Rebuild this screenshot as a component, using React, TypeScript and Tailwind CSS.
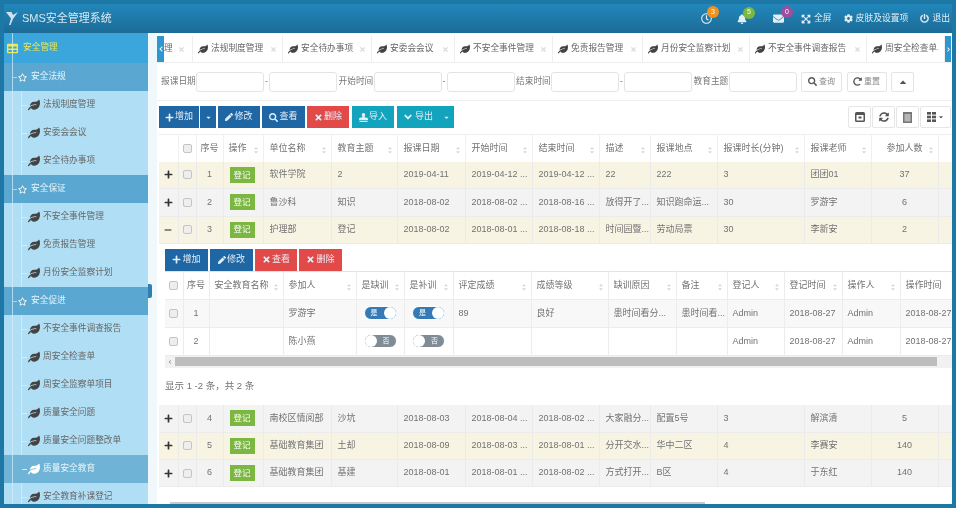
import type { ReactNode } from "react";
import {
  FaBell,
  FaCaretDown,
  FaCaretUp,
  FaCog,
  FaEnvelope,
  FaExpandArrowsAlt,
  FaAngleDown,
  FaChevronLeft,
  FaChevronRight,
  FaLeaf,
  FaMinus,
  FaPen,
  FaPlus,
  FaPowerOff,
  FaRedoAlt,
  FaRegClock,
  FaRegStar,
  FaSearch,
  FaStamp,
  FaSyncAlt,
  FaTable,
  FaTimes,
} from "react-icons/fa";

const sections = [
  { title: "安全法规", items: ["法规制度管理", "安委会会议", "安全待办事项"] },
  { title: "安全保证", items: ["不安全事件管理", "免责报告管理", "月份安全监察计划"] },
  {
    title: "安全促进",
    items: ["不安全事件调查报告", "周安全检查单", "周安全监察单项目", "质量安全问题", "质量安全问题整改单", "质量安全教育", "安全教育补课登记"],
  },
];

const tabs = [
  { label: "法规制度管理", w: "w-[90px]" },
  { label: "安全待办事项", w: "w-[89px]" },
  { label: "安委会会议", w: "w-[83px]" },
  { label: "不安全事件管理", w: "w-[98px]" },
  { label: "免责报告管理", w: "w-[90px]" },
  { label: "月份安全监察计划", w: "w-[107px]" },
  { label: "不安全事件调查报告", w: "w-[117px]" },
  { label: "周安全检查单", w: "w-[78px]" },
];

const mainHead = ["单位名称", "教育主题", "报课日期", "开始时间", "结束时间", "描述", "报课地点", "报课时长(分钟)", "报课老师", "参加人数"];

const topRows = [
  ["软件学院", "2", "2019-04-11", "2019-04-12 ...", "2019-04-12 ...", "22", "222", "3", "团团01", "37"],
  ["鲁沙科", "知识", "2018-08-02", "2018-08-02 ...", "2018-08-16 ...", "放得开了...", "知识跑命运...", "30", "罗游宇", "6"],
  ["护理部", "登记", "2018-08-02", "2018-08-01 ...", "2018-08-18 ...", "时间园暨...", "劳动局票", "30", "李新安", "2"],
];

const bottomRows = [
  ["南校区情阅部", "沙坑", "2018-08-03", "2018-08-04 ...", "2018-08-02 ...", "大家融分...", "配置5号", "3", "解滨清", "5"],
  ["基础教育集团", "土却", "2018-08-09", "2018-08-03 ...", "2018-08-01 ...", "分开交水...", "华中二区", "4", "李赛安", "140"],
  ["基础教育集团", "基建", "2018-08-01", "2018-08-01 ...", "2018-08-02 ...", "方式打开...", "B区", "4", "于东红", "140"],
];

const detailHead = ["评定成绩", "成绩等级", "缺训原因", "备注", "登记人", "登记时间", "操作人", "操作时间"];

function SortArrows() {
  return (
    <span className="absolute right-[4px] top-[10px] flex flex-col text-[#d5d5d5]">
      <FaCaretUp size={6} className="-mb-[2px]" />
      <FaCaretDown size={6} />
    </span>
  );
}

function Box() {
  return <span className="mx-auto block h-[9px] w-[9px] rounded-[2px] border border-[#c4c4c4] bg-[#eeeeee]" />;
}

function Btn({ color, w, icon, label }: { color: string; w: string; icon: ReactNode; label: string }) {
  return (
    <button className={`flex h-[22px] items-center justify-center gap-[1px] text-[9px] text-[#e4eef6] ${color} ${w}`}>
      {icon}
      {label}
    </button>
  );
}

function Toggle({ on }: { on: boolean }) {
  return (
    <span
      className={`mx-auto flex h-[14px] w-[33px] items-center rounded-full border border-white text-[7px] text-white ${
        on ? "flex-row bg-[#337ab7]" : "flex-row-reverse bg-[#7f8c96]"
      }`}
    >
      <span className="flex-1 text-center">{on ? "是" : "否"}</span>
      <span className="h-[12px] w-[12px] rounded-full bg-white" />
    </span>
  );
}

function Sidebar() {
  return (
    <aside className="relative w-[144px] shrink-0 overflow-hidden bg-[#b0dff5] text-[8.7px] text-[#666666]">
      <span className="absolute bottom-0 left-[8px] top-0 z-10 w-px bg-[#d4eefa]/70" />
      <div className="flex h-[30px] items-center bg-[#3aa6dc] pl-[3px] text-[#e6e85a]">
        <FaTable size={11} className="mr-[5px] text-[#f6ea3c]" />
        安全管理
      </div>
      {sections.map((s) => (
        <div key={s.title}>
          <div className="flex h-[28px] items-center bg-[#5aa8d1] pl-[9px] text-[#e8f4fa]">
            <span className="mr-px h-px w-[4px] bg-[#a9d6ec]" />
            <FaRegStar size={9} className="mr-[4px] text-white" />
            {s.title}
          </div>
          <div className="relative">
            <span className="absolute inset-y-0 left-[17px] w-px bg-[#cdebf9]" />
            {s.items.map((item) => {
              const active = item === "质量安全教育";
              return (
                <div
                  key={item}
                  className={`relative flex h-[28px] items-center pl-[18px] ${active ? "bg-[#6fb3d6] text-[#e8f4fa]" : ""}`}
                >
                  <span className="mr-px h-px w-[5px] bg-[#cdebf9]" />
                  <FaLeaf size={12} className={`mr-[3px] ${active ? "text-white" : "text-[#444444]"}`} />
                  {item}
                </div>
              );
            })}
          </div>
        </div>
      ))}
    </aside>
  );
}

function Tabs() {
  return (
    <div className="flex h-[27px] items-stretch border-b border-[#eeeeee] text-[8.7px] text-[#666666]">
      <span className="flex w-[7px] items-center justify-center bg-[#2f97cf] text-white">
        <FaChevronLeft size={6} />
      </span>
      <div className="flex w-[29px] items-center justify-between border-r border-[#eeeeee] pr-[7px]">
        理<FaTimes size={7} className="text-[#dddddd]" />
      </div>
      {tabs.map((t) => (
        <div key={t.label} className={`flex items-center justify-between border-r border-[#eeeeee] px-[5px] ${t.w}`}>
          <span className="flex items-center gap-[3px] whitespace-nowrap">
            <FaLeaf size={10} className="text-[#444444]" />
            {t.label}
          </span>
          <FaTimes size={7} className="text-[#dddddd]" />
        </div>
      ))}
      <span className="flex w-[6px] items-center justify-center bg-[#2f97cf] text-white">
        <FaChevronRight size={5} />
      </span>
    </div>
  );
}

function Field({ label, gap }: { label: string; gap?: boolean }) {
  const input = "h-[20px] w-[68px] rounded-[3px] border border-[#e4e4e4] bg-white";
  return (
    <div className="flex items-center text-[8.7px] text-[#777777]">
      <span className="w-[35px] whitespace-nowrap">{label}</span>
      <span className={input} />
      {gap && (
        <>
          <span className="w-[5px] text-center">-</span>
          <span className={input} />
        </>
      )}
    </div>
  );
}

function Filters() {
  const btn = "flex h-[20px] items-center justify-center gap-[2px] rounded-[2px] border border-[#e4e4e4] text-[8px] text-[#888888]";
  return (
    <div className="flex h-[38px] items-center gap-[1.5px] border-b border-[#eeeeee] pl-[4px]">
      <Field label="报课日期" gap />
      <Field label="开始时间" gap />
      <Field label="结束时间" gap />
      <Field label="教育主题" />
      <button className={`${btn} ml-[3px] w-[41px]`}>
        <FaSearch size={9} className="text-[#555555]" />
        查询
      </button>
      <button className={`${btn} ml-[3px] w-[40px]`}>
        <FaRedoAlt size={9} className="text-[#555555]" />
        重置
      </button>
      <button className={`${btn} ml-[3px] w-[23px]`}>
        <FaCaretUp size={10} className="text-[#555555]" />
      </button>
    </div>
  );
}

function Toolbar() {
  const tool = "flex h-[22px] items-center justify-center rounded-[2px] border border-[#e6e6e6] text-[#555555]";
  return (
    <div className="ml-[2px] flex h-[33px] items-start pr-[1px] pt-[5px]">
      <div className="flex gap-[2px]">
        <div className="flex gap-px">
          <Btn color="bg-[#1f66a5]" w="w-[40px]" icon={<FaPlus size={9} />} label="增加" />
          <Btn color="bg-[#1f66a5]" w="w-[16px]" icon={<FaCaretDown size={7} />} label="" />
        </div>
        <Btn color="bg-[#1f66a5]" w="w-[42px]" icon={<FaPen size={8} />} label="修改" />
        <Btn color="bg-[#1f66a5]" w="w-[43px]" icon={<FaSearch size={9} />} label="查看" />
        <Btn color="bg-[#e24a4a]" w="w-[42px]" icon={<FaTimes size={9} />} label="删除" />
        <Btn color="bg-[#12a4bd] ml-[1px]" w="w-[42px]" icon={<FaStamp size={9} />} label="导入" />
        <div className="ml-[1px] flex">
          <Btn color="bg-[#12a4bd]" w="w-[41px]" icon={<FaAngleDown size={12} />} label="导出" />
          <Btn color="bg-[#12a4bd]" w="w-[16px]" icon={<FaCaretDown size={7} />} label="" />
        </div>
      </div>
      <div className="ml-auto flex gap-px">
        <span className={`${tool} w-[23px]`}>
          <svg viewBox="0 0 10 10" className="h-[10px] w-[10px] fill-[#555555]">
            <path d="M1.5 0h7A1.5 1.5 0 0 1 10 1.5v7A1.5 1.5 0 0 1 8.5 10h-7A1.5 1.5 0 0 1 0 8.5v-7A1.5 1.5 0 0 1 1.5 0zM1.5 3v5.500h7V3z" />
            <rect x="3.5" y="4.5" width="3" height="2" />
          </svg>
        </span>
        <span className={`${tool} w-[23px]`}>
          <FaSyncAlt size={10} />
        </span>
        <span className={`${tool} w-[23px]`}>
          <svg viewBox="0 0 9 11" className="h-[11px] w-[9px]">
            <rect width="9" height="11" className="fill-[#777777]" />
            <rect x="1.5" y="2" width="6" height="7.5" className="fill-[#b5b5b5]" />
          </svg>
        </span>
        <span className={`${tool} w-[31px] gap-[2px]`}>
          <svg viewBox="0 0 9 10" className="h-[10px] w-[9px] fill-[#555555]">
            <rect width="4" height="2.6" />
            <rect x="5" width="4" height="2.6" />
            <rect y="3.7" width="4" height="2.6" />
            <rect x="5" y="3.7" width="4" height="2.6" />
            <rect y="7.4" width="4" height="2.6" />
            <rect x="5" y="7.4" width="4" height="2.6" />
          </svg>
          <FaCaretDown size={6} />
        </span>
      </div>
    </div>
  );
}

function MainColumns() {
  return (
    <colgroup>
      <col className="w-[19px]" />
      <col className="w-[18px]" />
      <col className="w-[27px]" />
      <col className="w-[40px]" />
      <col className="w-[68px]" />
      <col className="w-[66px]" />
      <col className="w-[68px]" />
      <col className="w-[67px]" />
      <col className="w-[67px]" />
      <col className="w-[51px]" />
      <col className="w-[67px]" />
      <col className="w-[87px]" />
      <col className="w-[67px]" />
      <col className="w-[67px]" />
      <col className="w-[15px]" />
    </colgroup>
  );
}

function DataRow({ n, cells, open, tone }: { n: number; cells: string[]; open?: boolean; tone: string }) {
  return (
    <tr className={`h-[27.3px] border-b border-[#ececec] ${tone}`}>
      <td className="border-r border-[#ebebeb] text-center text-[#333333]">
        {open ? <FaMinus size={8} className="mx-auto text-[#666666]" /> : <FaPlus size={9} className="mx-auto" />}
      </td>
      <td className="border-r border-[#ebebeb]">
        <Box />
      </td>
      <td className="border-r border-[#ebebeb] text-center">{n}</td>
      <td className="border-r border-[#ebebeb] pl-[6px]">
        <span className="flex h-[16px] w-[25px] items-center justify-center bg-[#7cb742] text-[8.5px] text-white">登记</span>
      </td>
      {cells.map((c, i) => (
        <td
          key={i}
          className={`overflow-hidden whitespace-nowrap border-r border-[#ebebeb] ${i === 9 ? "text-center" : "pl-[6px]"}`}
        >
          {c}
        </td>
      ))}
      <td />
    </tr>
  );
}

function DetailPanel() {
  const cell = "border-r border-b border-[#ececec] overflow-hidden whitespace-nowrap";
  const head = `relative ${cell} pl-[5px] font-normal text-left`;
  return (
    <div className="h-[161px] overflow-hidden bg-white pl-[6px] pt-[5px]">
      <div className="flex gap-[2px]">
        <Btn color="bg-[#1f66a5]" w="w-[43px]" icon={<FaPlus size={9} />} label="增加" />
        <Btn color="bg-[#1f66a5]" w="w-[43px]" icon={<FaPen size={8} />} label="修改" />
        <Btn color="bg-[#e24a4a]" w="w-[42px]" icon={<FaTimes size={9} />} label="查看" />
        <Btn color="bg-[#e24a4a]" w="w-[43px]" icon={<FaTimes size={9} />} label="删除" />
      </div>
      <table className="w-[790px] table-fixed border-t border-[#e2e2e2] text-[9px] text-[#727272]">
        <colgroup>
          <col className="w-[18px]" />
          <col className="w-[26px]" />
          <col className="w-[74px]" />
          <col className="w-[73px]" />
          <col className="w-[48px]" />
          <col className="w-[49px]" />
          <col className="w-[78px]" />
          <col className="w-[77px]" />
          <col className="w-[68px]" />
          <col className="w-[51px]" />
          <col className="w-[57px]" />
          <col className="w-[58px]" />
          <col className="w-[58px]" />
          <col className="w-[55px]" />
        </colgroup>
        <thead>
          <tr className="h-[28px]">
            <th className={cell}>
              <Box />
            </th>
            <th className={`${cell} font-normal`}>序号</th>
            <th className={head}>安全教育名称<SortArrows /></th>
            <th className={head}>参加人<SortArrows /></th>
            <th className={head}>是缺训<SortArrows /></th>
            <th className={head}>是补训<SortArrows /></th>
            {detailHead.map((h) => (
              <th key={h} className={head}>
                {h}
                {h !== "操作时间" && <SortArrows />}
              </th>
            ))}
          </tr>
        </thead>
        <tbody>
          <tr className="h-[28px] bg-[#f8f8f8]">
            <td className={cell}><Box /></td>
            <td className={`${cell} text-center`}>1</td>
            <td className={cell} />
            <td className={`${cell} pl-[5px]`}>罗游宇</td>
            <td className={cell}><Toggle on /></td>
            <td className={cell}><Toggle on /></td>
            <td className={`${cell} pl-[5px]`}>89</td>
            <td className={`${cell} pl-[5px]`}>良好</td>
            <td className={`${cell} pl-[5px]`}>患时间看分...</td>
            <td className={`${cell} pl-[5px]`}>患时间看...</td>
            <td className={`${cell} pl-[5px]`}>Admin</td>
            <td className={`${cell} pl-[5px]`}>2018-08-27</td>
            <td className={`${cell} pl-[5px]`}>Admin</td>
            <td className={`${cell} pl-[5px]`}>2018-08-27</td>
          </tr>
          <tr className="h-[28px]">
            <td className={cell}><Box /></td>
            <td className={`${cell} text-center`}>2</td>
            <td className={cell} />
            <td className={`${cell} pl-[5px]`}>陈小燕</td>
            <td className={cell}><Toggle on={false} /></td>
            <td className={cell}><Toggle on={false} /></td>
            <td className={cell} />
            <td className={cell} />
            <td className={cell} />
            <td className={cell} />
            <td className={`${cell} pl-[5px]`}>Admin</td>
            <td className={`${cell} pl-[5px]`}>2018-08-27</td>
            <td className={`${cell} pl-[5px]`}>Admin</td>
            <td className={`${cell} pl-[5px]`}>2018-08-27</td>
          </tr>
        </tbody>
      </table>
      <div className="flex h-[12px] items-center bg-[#f1f1f1]">
        <FaChevronLeft size={4} className="mx-[3px] text-[#888888]" />
        <span className="h-[9px] w-[762px] bg-[#bdbdbd]" />
      </div>
      <p className="mt-[11px] text-[9.5px] text-[#727272]">显示 1 -2 条，共 2 条</p>
    </div>
  );
}

function MainTable() {
  return (
    <table className="ml-[2px] w-[794px] table-fixed text-[9px] text-[#727272]">
      <MainColumns />
      <thead>
        <tr className="h-[27px] border-t border-[#eeeeee]">
          <th className="border-r border-[#f0f0f0]" />
          <th className="border-r border-[#f0f0f0]">
            <Box />
          </th>
          <th className="border-r border-[#f0f0f0] font-normal">序号</th>
          <th className="relative border-r border-[#f0f0f0] pl-[5px] text-left font-normal">
            操作
            <SortArrows />
          </th>
          {mainHead.map((h) => (
            <th
              key={h}
              className={`relative whitespace-nowrap border-r border-[#f0f0f0] font-normal ${
                h === "参加人数" ? "text-center" : "pl-[6px] text-left"
              }`}
            >
              {h}
              <SortArrows />
            </th>
          ))}
          <th />
        </tr>
      </thead>
      <tbody>
        <DataRow n={1} cells={topRows[0]} tone="bg-[#f8f4e4]" />
        <DataRow n={2} cells={topRows[1]} tone="bg-[#f3f3f3]" />
        <DataRow n={3} cells={topRows[2]} tone="bg-[#f8f4e4]" open />
        <tr>
          <td colSpan={15} className="p-0">
            <DetailPanel />
          </td>
        </tr>
        <DataRow n={4} cells={bottomRows[0]} tone="bg-[#f3f3f3]" />
        <DataRow n={5} cells={bottomRows[1]} tone="bg-[#f8f4e4]" />
        <DataRow n={6} cells={bottomRows[2]} tone="bg-[#f3f3f3]" />
      </tbody>
    </table>
  );
}

function Header() {
  const link = "flex items-center gap-[3px] text-[8.8px] text-[#e2eef5] whitespace-nowrap";
  return (
    <header className="flex h-[29px] shrink-0 items-center bg-gradient-to-b from-[#2188bb] to-[#1c6b96] pl-[2px] pr-[2px]">
      <svg viewBox="0 0 12 13" className="mr-[4px] h-[13px] w-[12px] fill-[#cfe3ee]">
        <path d="M0 0h5.500l1.500 3 5-3-5 7-2.500 6H3l2-6.500z" />
      </svg>
      <span className="text-[11px] text-[#d8e8f0]">SMS安全管理系统</span>
      <div className="ml-auto flex items-center text-[#e2eef5]">
        <span className="relative mr-[25px]">
          <FaRegClock size={11} />
          <b className="absolute -top-[7px] left-[6px] flex h-[12px] w-[12px] items-center justify-center rounded-full bg-[#f0921e] text-[7px] font-normal text-white">3</b>
        </span>
        <span className="relative mr-[26px]">
          <FaBell size={10} />
          <b className="absolute -top-[7px] left-[6px] flex h-[12px] w-[12px] items-center justify-center rounded-full bg-[#7cb742] text-[7px] font-normal text-white">5</b>
        </span>
        <span className="relative mr-[17px]">
          <FaEnvelope size={11} />
          <b className="absolute -top-[7px] left-[8px] flex h-[12px] w-[12px] items-center justify-center rounded-full bg-[#9b4f9e] text-[7px] font-normal text-white">0</b>
        </span>
        <span className={`${link} mr-[12px]`}>
          <FaExpandArrowsAlt size={10} />
          全屏
        </span>
        <span className={`${link} mr-[12px]`}>
          <FaCog size={9} />
          皮肤及设置项
        </span>
        <span className={link}>
          <FaPowerOff size={9} />
          退出
        </span>
      </div>
    </header>
  );
}

export default function App() {
  return (
    <div className="h-[508px] w-[956px] overflow-hidden bg-[#1e78a6] blur-[0.5px] [font-family:'Liberation_Sans','Noto_Sans_CJK_SC',sans-serif]">
      <div className="flex h-full flex-col p-[4px]">
        <Header />
        <div className="flex min-h-0 flex-1">
          <Sidebar />
          <main className="relative min-w-0 flex-1 overflow-hidden bg-white pl-[9px] pt-[3px]">
            <span className="absolute inset-y-0 left-0 w-[9px] bg-[#f0f8fc]" />
            <span className="absolute left-0 top-[251px] h-[14px] w-[4px] rounded-r-[2px] bg-[#2f7fb0]" />
            <Tabs />
            <Filters />
            <Toolbar />
            <MainTable />
            <span className="absolute bottom-0 left-[22px] h-[2px] w-[535px] bg-[#c9c9c9]" />
          </main>
        </div>
      </div>
    </div>
  );
}
